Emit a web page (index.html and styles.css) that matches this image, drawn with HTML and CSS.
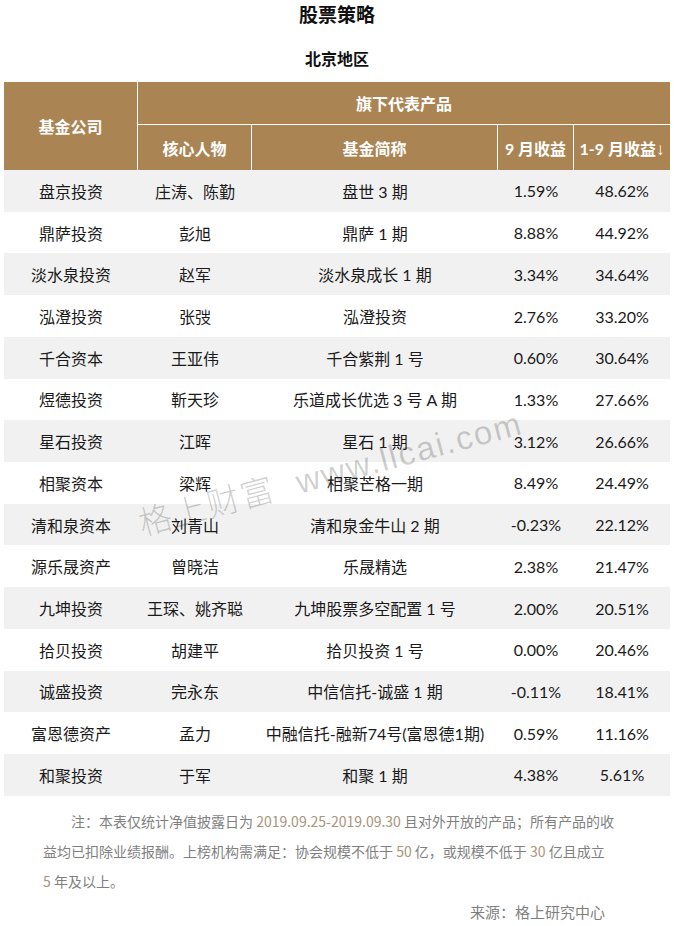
FILE: index.html
```html
<!DOCTYPE html>
<html lang="zh-CN">
<head>
<meta charset="utf-8">
<title>股票策略 - 北京地区</title>
<link rel="stylesheet" href="styles.css">
</head>
<body>
<div class="page">
  <h1 class="title">股票策略</h1>
  <h2 class="region">北京地区</h2>
  <div class="table-wrap">
    <table class="rank">
      <colgroup>
        <col class="c1"><col class="c2"><col class="c3"><col class="c4"><col class="c5">
      </colgroup>
      <thead>
        <tr class="hr1">
          <th rowspan="2" class="sep">基金公司</th>
          <th colspan="4" class="group">旗下代表产品</th>
        </tr>
        <tr class="hr2">
          <th class="sep">核心人物</th>
          <th class="sep">基金简称</th>
          <th class="sep">9 月收益</th>
          <th>1-9 月收益<span class="arrow">↓</span></th>
        </tr>
      </thead>
      <tbody>
        <tr><td>盘京投资</td><td>庄涛、陈勤</td><td>盘世 3 期</td><td>1.59%</td><td>48.62%</td></tr>
        <tr><td>鼎萨投资</td><td>彭旭</td><td>鼎萨 1 期</td><td>8.88%</td><td>44.92%</td></tr>
        <tr><td>淡水泉投资</td><td>赵军</td><td>淡水泉成长 1 期</td><td>3.34%</td><td>34.64%</td></tr>
        <tr><td>泓澄投资</td><td>张弢</td><td>泓澄投资</td><td>2.76%</td><td>33.20%</td></tr>
        <tr><td>千合资本</td><td>王亚伟</td><td>千合紫荆 1 号</td><td>0.60%</td><td>30.64%</td></tr>
        <tr><td>煜德投资</td><td>靳天珍</td><td>乐道成长优选 3 号 A 期</td><td>1.33%</td><td>27.66%</td></tr>
        <tr><td>星石投资</td><td>江晖</td><td>星石 1 期</td><td>3.12%</td><td>26.66%</td></tr>
        <tr><td>相聚资本</td><td>梁辉</td><td>相聚芒格一期</td><td>8.49%</td><td>24.49%</td></tr>
        <tr><td>清和泉资本</td><td>刘青山</td><td>清和泉金牛山 2 期</td><td>-0.23%</td><td>22.12%</td></tr>
        <tr><td>源乐晟资产</td><td>曾晓洁</td><td>乐晟精选</td><td>2.38%</td><td>21.47%</td></tr>
        <tr><td>九坤投资</td><td>王琛、姚齐聪</td><td>九坤股票多空配置 1 号</td><td>2.00%</td><td>20.51%</td></tr>
        <tr><td>拾贝投资</td><td>胡建平</td><td>拾贝投资 1 号</td><td>0.00%</td><td>20.46%</td></tr>
        <tr><td>诚盛投资</td><td>完永东</td><td>中信信托-诚盛 1 期</td><td>-0.11%</td><td>18.41%</td></tr>
        <tr><td>富恩德资产</td><td>孟力</td><td>中融信托-融新74号(富恩德1期)</td><td>0.59%</td><td>11.16%</td></tr>
        <tr><td>和聚投资</td><td>于军</td><td>和聚 1 期</td><td>4.38%</td><td>5.61%</td></tr>
      </tbody>
    </table>
    <div class="watermark">格上财富&nbsp;&nbsp;www.llcai.com</div>
  </div>
  <p class="note">注：本表仅统计净值披露日为 <span class="num">2019.09.25-2019.09.30</span> 且对外开放的产品；所有产品的收<br>益均已扣除业绩报酬。上榜机构需满足：协会规模不低于 <span class="num">50</span> 亿，或规模不低于 <span class="num">30</span> 亿且成立<br><span class="num">5</span> 年及以上。</p>
  <p class="source">来源：格上研究中心</p>
</div>
</body>
</html>
```

FILE: styles.css
```css
html, body {
  margin: 0;
  padding: 0;
  background: #ffffff;
}

body {
  font-family: Lato, "Noto Sans CJK SC", sans-serif;
  color: #1a1a1a;
}

.page {
  width: 674px;
  height: 926px;
  overflow: hidden;
}

.title {
  margin: 0;
  font-size: 19px;
  line-height: 28px;
  font-weight: 700;
  text-align: center;
  color: #111;
  font-family: "Noto Sans CJK SC", sans-serif;
}

.region {
  margin: 18px 0 12px;
  font-size: 16px;
  line-height: 24px;
  font-weight: 700;
  text-align: center;
  color: #111;
  font-family: "Noto Sans CJK SC", sans-serif;
}

.table-wrap {
  position: relative;
  padding-left: 4px;
}

.rank {
  width: 666px;
  table-layout: fixed;
  border-collapse: separate;
  border-spacing: 0;
  font-size: 16px;
}

.c1 { width: 134px; }
.c2 { width: 114px; }
.c3 { width: 246px; }
.c4 { width: 76px; }
.c5 { width: 96px; }

.rank th {
  background: #ab8454;
  color: #ffffff;
  font-weight: 700;
  padding: 0;
  text-align: center;
  vertical-align: middle;
  white-space: nowrap;
  box-sizing: border-box;
}

.rank th.sep {
  border-right: 1px solid #ffffff;
}

.hr1 th {
  height: 43px;
}

.hr1 th.group {
  border-bottom: 1px solid #ffffff;
}

.hr2 th {
  height: 45px;
}

.arrow {
  font-family: "Liberation Sans", sans-serif;
  font-weight: 700;
  font-size: 17px;
}

.rank td {
  height: 41.73px;
  padding: 0;
  text-align: center;
  vertical-align: middle;
  white-space: nowrap;
  box-sizing: border-box;
}

.rank tbody tr:nth-child(odd) td {
  background: #f1f1f1;
}

.watermark {
  position: absolute;
  left: 330px;
  top: 389px;
  transform: translate(-50%, -50%) rotate(-15deg);
  white-space: nowrap;
  font-family: "Liberation Sans", "Noto Sans CJK SC", sans-serif;
  font-weight: 300;
  font-size: 33px;
  letter-spacing: 2px;
  color: rgba(0, 0, 0, 0.19);
  pointer-events: none;
}

.note {
  margin: 10px 0 0 43px;
  width: 600px;
  font-family: "Noto Sans CJK SC", sans-serif;
  font-size: 14px;
  line-height: 30px;
  color: #7f7f7f;
  text-indent: 28px;
  white-space: nowrap;
}

.note .num {
  color: #a8957a;
}

.source {
  margin: 2px 0 0;
  width: 605px;
  text-align: right;
  font-family: "Noto Sans CJK SC", sans-serif;
  font-size: 15px;
  line-height: 28px;
  color: #7f7f7f;
}
```
